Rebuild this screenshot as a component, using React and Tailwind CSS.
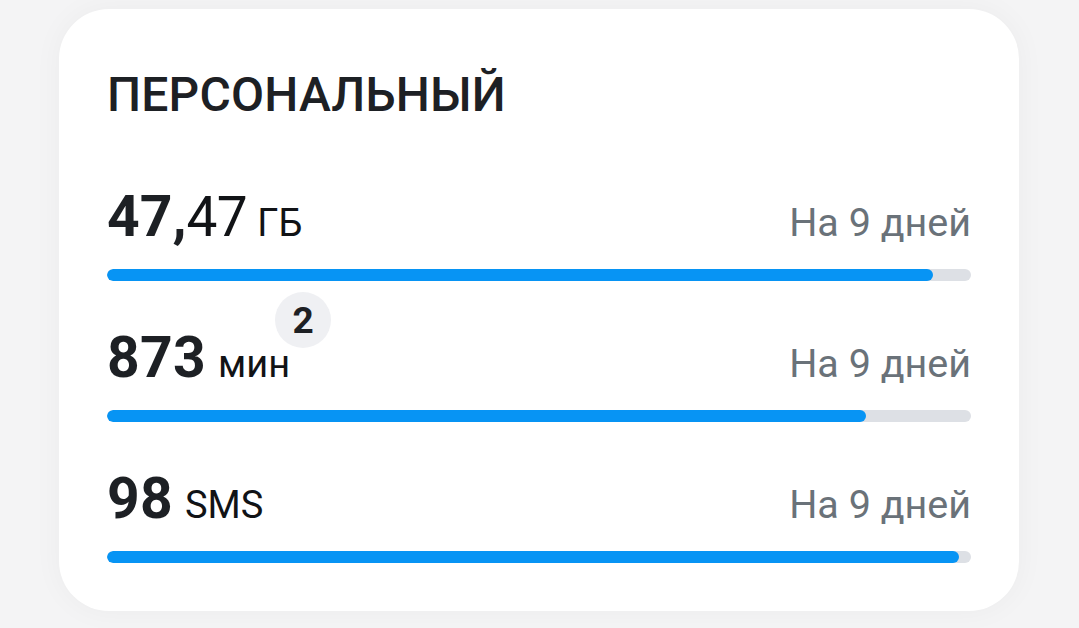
import React from "react";

const rows = [
  { value: "47,", dec: "47", unit: "ГБ", pct: 0.956 },
  { value: "873", unit: "мин", pct: 0.878, badge: "2" },
  { value: "98", unit: "SMS", pct: 0.986 },
];

export default function App() {
  return (
    <div
      className="w-[1079px] h-[628px] bg-[#f4f4f5] overflow-hidden pt-[9px] pl-[59px]"
      style={{ fontFamily: "Roboto, 'Noto Sans', sans-serif" }}
    >
      <div className="w-[960px] h-[602px] bg-white rounded-[50px] shadow-[0_0_30px_rgba(0,0,0,0.04)] px-[48px] pt-[62px]">
        <div className="text-[48px] leading-none font-medium text-[#1d2024] tracking-[0.2px]">
          ПЕРСОНАЛЬНЫЙ
        </div>
        <div className="mt-[69px] flex flex-col gap-[48px]">
          {rows.map((r, i) => (
            <div key={i}>
              <div className="relative flex items-baseline justify-between">
                <div className="flex items-baseline text-[#1d2024]">
                  <span className={`text-[57px] leading-none font-bold ${r.dec ? "" : "tracking-[0.3px]"}`}>
                    {r.value}
                  </span>
                  {r.dec && (
                    <span className="text-[55px] leading-none font-normal text-[#111316] tracking-[-0.5px]">
                      {r.dec}
                    </span>
                  )}
                  <span className={`text-[38px] leading-none text-[#111316] ${r.dec ? "ml-[10px]" : "ml-[12px]"}`}>
                    {r.unit}
                  </span>
                </div>
                <span className="text-[39.5px] leading-none text-[#6a7279]">На 9 дней</span>
                {r.badge && (
                  <div className="absolute left-[168px] top-[-37px] w-[56px] h-[56px] rounded-full bg-[#eff0f3] flex items-center justify-center text-[37px] font-bold text-[#1d2024] leading-none">
                    {r.badge}
                  </div>
                )}
              </div>
              <div className="mt-[24px] h-[12px] w-full rounded-full bg-[#dde0e5] overflow-hidden">
                <div
                  className="h-full rounded-full bg-[#0794f4]"
                  style={{ width: `${r.pct * 100}%` }}
                />
              </div>
            </div>
          ))}
        </div>
      </div>
    </div>
  );
}
